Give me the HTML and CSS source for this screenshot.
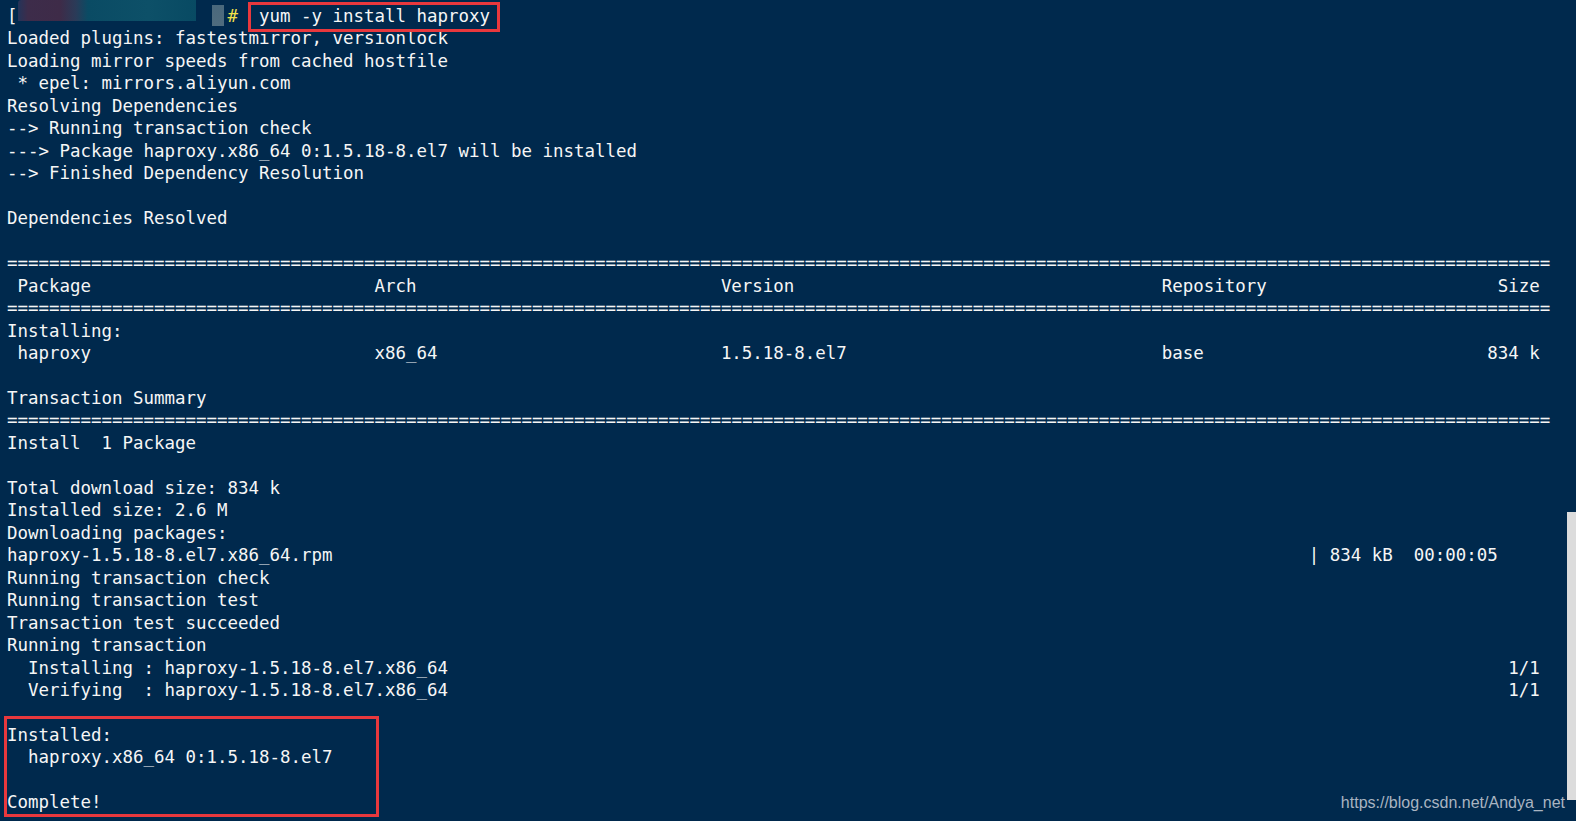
FILE: index.html
```html
<!DOCTYPE html>
<html lang="en">
<head>
<meta charset="utf-8">
<title>yum -y install haproxy</title>
<link rel="stylesheet" href="styles.css">
</head>
<body>
<div class="screen">
  <div class="term">
    <div class="l">[<span class="blur"></span><span class="hash">#</span> <span class="hl"> yum -y install haproxy </span></div>
    <div class="l">Loaded plugins: fastestmirror, versionlock</div>
    <div class="l">Loading mirror speeds from cached hostfile</div>
    <div class="l"> * epel: mirrors.aliyun.com</div>
    <div class="l">Resolving Dependencies</div>
    <div class="l">--&gt; Running transaction check</div>
    <div class="l">---&gt; Package haproxy.x86_64 0:1.5.18-8.el7 will be installed</div>
    <div class="l">--&gt; Finished Dependency Resolution</div>
    <div class="l"></div>
    <div class="l">Dependencies Resolved</div>
    <div class="l"></div>
    <div class="l">===================================================================================================================================================</div>
    <div class="l row"><span> Package</span><span>Arch</span><span>Version</span><span>Repository</span><span>Size</span></div>
    <div class="l">===================================================================================================================================================</div>
    <div class="l">Installing:</div>
    <div class="l row"><span> haproxy</span><span>x86_64</span><span>1.5.18-8.el7</span><span>base</span><span>834 k</span></div>
    <div class="l"></div>
    <div class="l">Transaction Summary</div>
    <div class="l">===================================================================================================================================================</div>
    <div class="l">Install  1 Package</div>
    <div class="l"></div>
    <div class="l">Total download size: 834 k</div>
    <div class="l">Installed size: 2.6 M</div>
    <div class="l">Downloading packages:</div>
    <div class="l dl"><span>haproxy-1.5.18-8.el7.x86_64.rpm</span><span>| 834 kB  00:00:05</span></div>
    <div class="l">Running transaction check</div>
    <div class="l">Running transaction test</div>
    <div class="l">Transaction test succeeded</div>
    <div class="l">Running transaction</div>
    <div class="l step"><span>  Installing : haproxy-1.5.18-8.el7.x86_64</span><span>1/1</span></div>
    <div class="l step"><span>  Verifying  : haproxy-1.5.18-8.el7.x86_64</span><span>1/1</span></div>
    <div class="l"></div>
    <div class="boxed">
      <div class="l">Installed:</div>
      <div class="l">  haproxy.x86_64 0:1.5.18-8.el7</div>
      <div class="l"></div>
      <div class="l">Complete!</div>
    </div>
  </div>
  <div class="scroll"><div class="thumb"></div></div>
  <div class="watermark">https://blog.csdn.net/Andya_net</div>
</div>
</body>
</html>
```

FILE: styles.css
```css
* { box-sizing: border-box; }

html, body {
  margin: 0;
  padding: 0;
  background: #00294d;
  overflow: hidden;
}

.screen {
  position: relative;
  display: flex;
  width: 1576px;
  height: 821px;
  background: #00294d;
}

.term {
  flex: 1;
  padding: 5px 0 0 7px;
  font-family: "DejaVu Sans Mono", "Liberation Mono", monospace;
  font-size: 17.46px;
  line-height: 22.47px;
  color: #f6f6f6;
}

.l {
  height: 22.47px;
  white-space: pre;
}

.row {
  display: grid;
  grid-template-columns: 35ch 33ch 42ch 1fr auto;
  width: 146ch;
}

.dl {
  display: grid;
  grid-template-columns: 124ch auto;
}

.step {
  display: flex;
  justify-content: space-between;
  width: 146ch;
}

.hash { color: #f3e04a; }

.blur {
  display: inline-block;
  width: 20ch;
  height: 26px;
  vertical-align: top;
  margin-top: -5px;
  background:
    linear-gradient(to right, #24345a 0, #3d2c4a 10px, #3e2b48 42px, #2a3b58 58px, #0a4b64 70px, #0d5068 130px, #084a63 178px) 0 0 / 178px 21px no-repeat,
    linear-gradient(#4a687c, #4f6c7e) 194px 5px / 12px 21px no-repeat;
  border-radius: 3px;
  filter: blur(0.6px);
}

.hl { position: relative; }

.hl::after {
  content: "";
  position: absolute;
  left: 0;
  right: 0;
  top: -4.5px;
  bottom: -6px;
  border: 3px solid #e8383d;
}

.boxed { position: relative; }

.boxed::after {
  content: "";
  position: absolute;
  left: -3px;
  width: 369px;
  top: -8px;
  bottom: -3px;
  border: 3px solid #e8383d;
}

.scroll {
  width: 9px;
  flex: none;
}

.thumb {
  margin-top: 512px;
  height: 288px;
  background: #dcdcdc;
}

.watermark {
  position: absolute;
  top: 795px;
  right: 11px;
  font-family: "Liberation Sans", Arial, sans-serif;
  font-size: 16px;
  line-height: 16px;
  color: #a9b4c1;
}
```
